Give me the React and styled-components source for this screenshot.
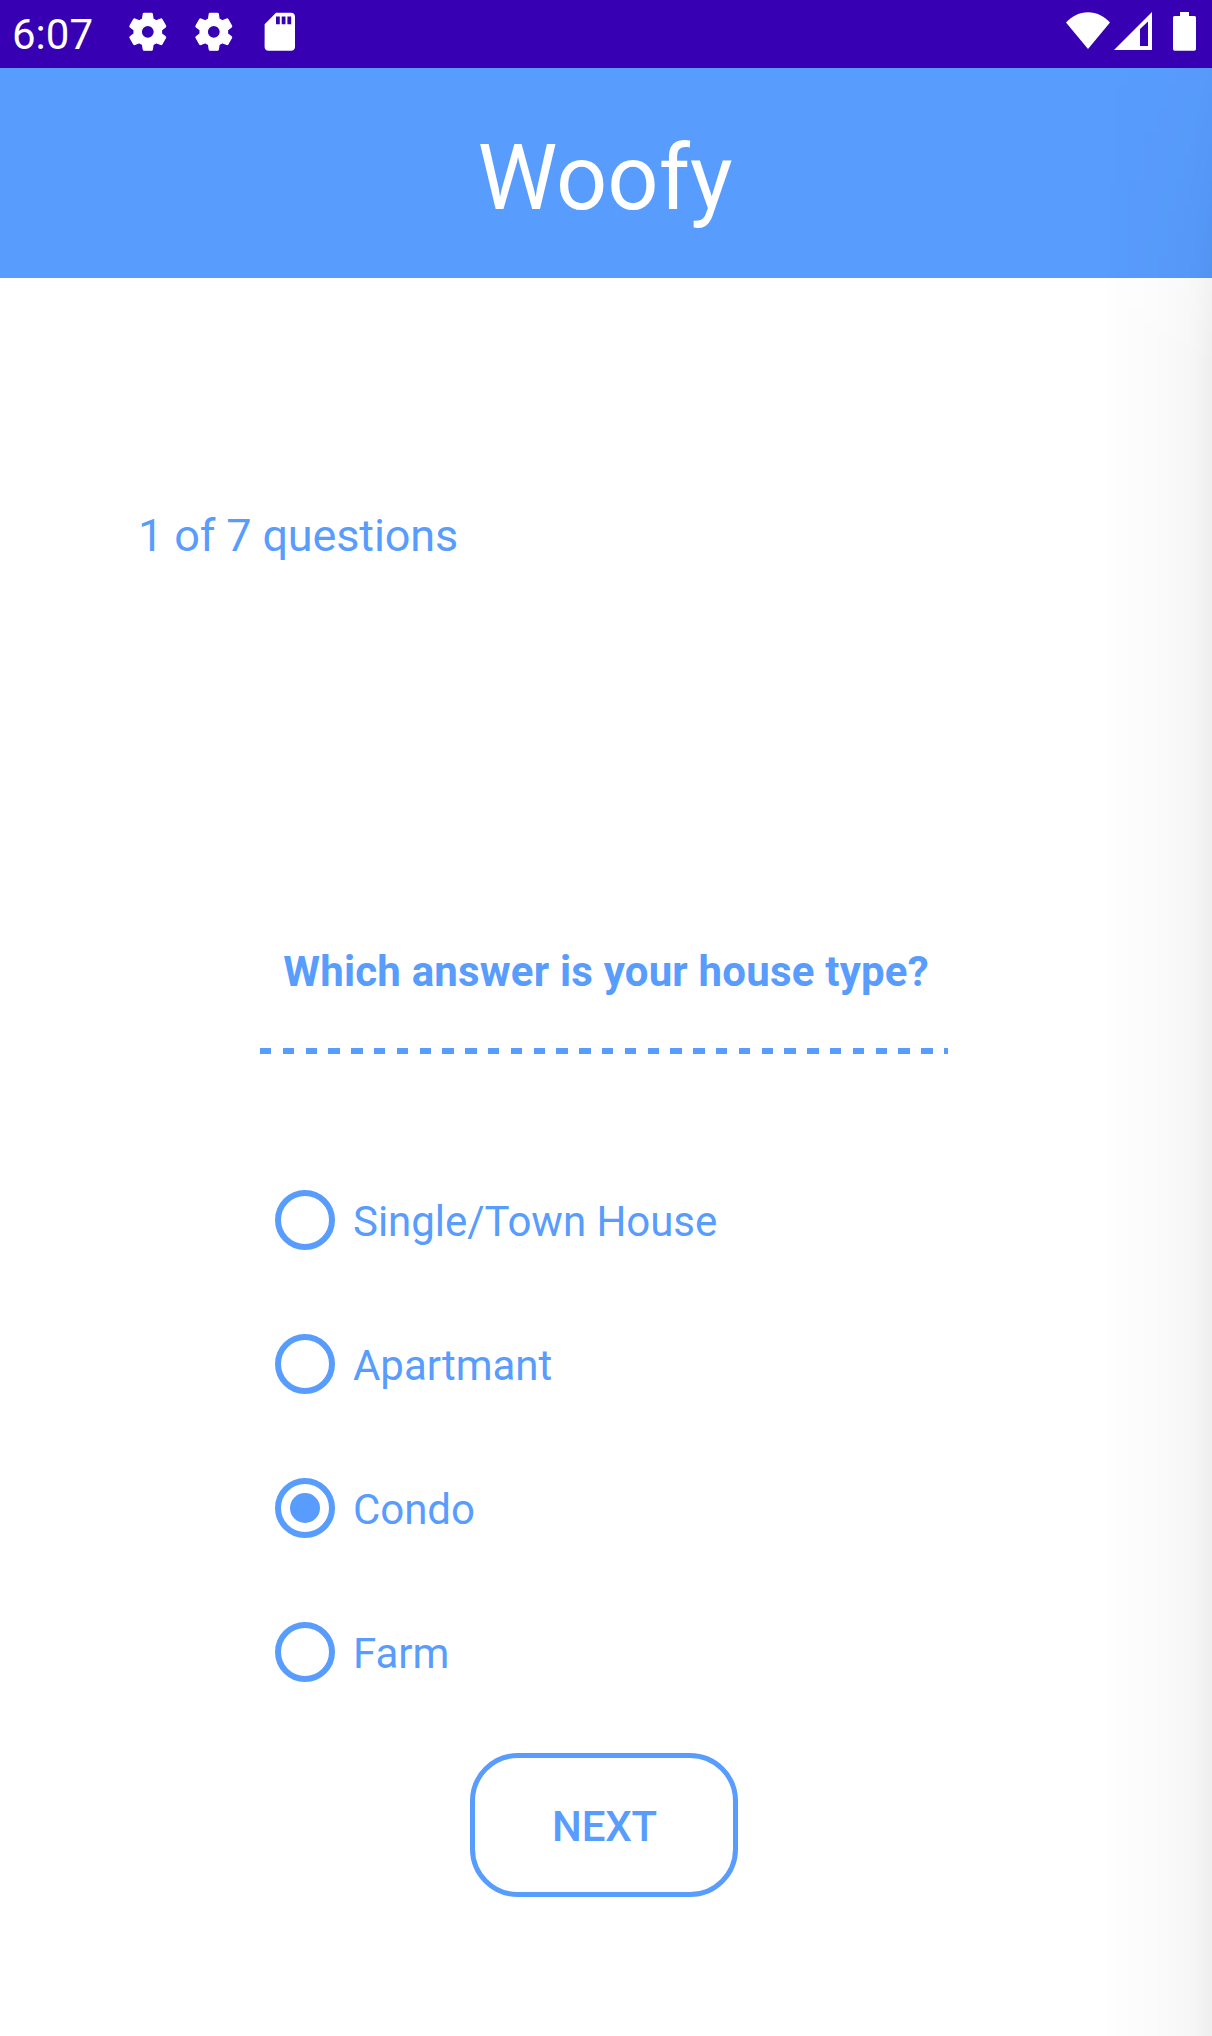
import React, { useState } from "react";
import styled, { createGlobalStyle } from "styled-components";

const BLUE = "#589cfd";

const GlobalStyle = createGlobalStyle`
  *, *::before, *::after { box-sizing: border-box; }
  body { margin: 0; background: #fff; }
`;

const Screen = styled.div`
  position: relative;
  display: flex;
  flex-direction: column;
  width: 1212px;
  height: 2036px;
  overflow: hidden;
  background: #fff;
  color: ${BLUE};
  font-family: Roboto, "Noto Sans", sans-serif;
`;

const StatusBar = styled.div`
  display: flex;
  flex: none;
  justify-content: space-between;
  height: 68px;
  padding: 0 16px 0 12px;
  background: #3700b3;
  color: #fff;
`;

const StatusGroup = styled.div`
  display: flex;
  align-items: flex-start;
`;

const Clock = styled.span`
  width: 113px;
  font-size: 42px;
  line-height: 70px;
`;

const NoticeIcon = styled.svg`
  flex: none;
  width: 45.6px;
  height: 45.6px;
  margin: 9.4px 20.4px 0 0;
  fill: #fff;
`;

const SystemIcon = styled.svg`
  flex: none;
  width: ${(p) => p.$width}px;
  height: 40px;
  margin: 12px 0 0 ${(p) => p.$gap}px;
  fill: #fff;
`;

const Header = styled.header`
  flex: none;
  height: 210px;
  padding: 6px 2px 0 0;
  background: ${BLUE};
`;

const Title = styled.h1`
  margin: 0;
  color: #fff;
  font-size: 90px;
  font-weight: 400;
  line-height: 210px;
  text-align: center;
`;

const Progress = styled.p`
  flex: none;
  margin: 228px 0 0 138px;
  font-size: 45px;
  line-height: 60px;
  letter-spacing: -0.14px;
`;

const Question = styled.h2`
  flex: none;
  margin: 376px 0 0;
  font-size: 42px;
  font-weight: 700;
  line-height: 60px;
  letter-spacing: 0.2px;
  text-align: center;
`;

const DashedRule = styled.div`
  flex: none;
  width: 688px;
  height: 6px;
  margin: 46px 0 0 260px;
  background: repeating-linear-gradient(90deg, ${BLUE} 0 11.4px, transparent 11.4px 22.8px);
`;

const Options = styled.div`
  display: flex;
  flex: none;
  flex-direction: column;
  margin: 94px 0 0 275px;
`;

const Option = styled.label`
  display: flex;
  align-items: center;
  height: 144px;
`;

const Radio = styled.input`
  appearance: none;
  display: grid;
  place-items: center;
  width: 60px;
  height: 60px;
  margin: 0;
  border: 6px solid ${BLUE};
  border-radius: 50%;

  &:checked::before {
    content: "";
    width: 30px;
    height: 30px;
    border-radius: 50%;
    background: ${BLUE};
  }
`;

const OptionText = styled.span`
  padding: 4px 0 0 18px;
  font-size: 42px;
  line-height: 60px;
  letter-spacing: -0.04px;
`;

const NextButton = styled.button`
  flex: none;
  width: 268px;
  height: 144px;
  margin: 29px 0 0 470px;
  padding: 4px 0 0 1px;
  border: 5px solid ${BLUE};
  border-radius: 48px;
  background: transparent;
  color: ${BLUE};
  font-family: inherit;
  font-size: 42px;
  font-weight: 500;
  line-height: 60px;
  letter-spacing: -0.2px;
`;

/* Soft shade falling over the right edge of the page. */
const EdgeShade = styled.div`
  position: absolute;
  top: 68px;
  right: 0;
  bottom: 0;
  width: 104px;
  background: linear-gradient(90deg, rgba(0, 0, 0, 0.004), rgba(0, 0, 0, 0.02) 55%, rgba(0, 0, 0, 0.035) 82%, rgba(0, 0, 0, 0.065));
  mask-image: linear-gradient(180deg, rgba(0, 0, 0, 0.2), #000 300px);
  pointer-events: none;
`;

const Gear = () => (
  <NoticeIcon viewBox="0 0 24 24">
    <path
      stroke="#fff"
      strokeWidth=".6"
      strokeLinejoin="round"
      transform="translate(12 12) scale(.97) translate(-12 -12)"
      d="M19.43 12.98c.04-.32.07-.64.07-.98s-.03-.66-.07-.98l2.11-1.65c.19-.15.24-.42.12-.64l-2-3.46c-.12-.22-.39-.3-.61-.22l-2.49 1c-.52-.4-1.08-.73-1.69-.98l-.38-2.65C14.46 2.18 14.25 2 14 2h-4c-.25 0-.46.18-.49.42l-.38 2.65c-.61.25-1.17.59-1.69.98l-2.49-1c-.23-.09-.49 0-.61.22l-2 3.46c-.13.22-.07.49.12.64l2.11 1.65c-.04.32-.07.65-.07.98s.03.66.07.98l-2.11 1.65c-.19.15-.24.42-.12.64l2 3.46c.12.22.39.3.61.22l2.49-1c.52.4 1.08.73 1.69.98l.38 2.65c.03.24.24.42.49.42h4c.25 0 .46-.18.49-.42l.38-2.65c.61-.25 1.17-.59 1.69-.98l2.49 1c.23.09.49 0 .61-.22l2-3.46c.12-.22.07-.49-.12-.64l-2.11-1.65zM12 15.5c-1.93 0-3.5-1.57-3.5-3.5s1.57-3.5 3.5-3.5 3.5 1.57 3.5 3.5-1.57 3.5-3.5 3.5z"
    />
  </NoticeIcon>
);

const SdCard = () => (
  <NoticeIcon viewBox="0 0 24 24">
    <path d="M18 2h-8L4.02 8 4 20c0 1.1.9 2 2 2h12c1.1 0 2-.9 2-2V4c0-1.1-.9-2-2-2zm-6 6h-2V4h2v4zm3 0h-2V4h2v4zm3 0h-2V4h2v4z" />
  </NoticeIcon>
);

const CHOICES = ["Single/Town House", "Apartmant", "Condo", "Farm"];

export default function App() {
  const [choice, setChoice] = useState("Condo");
  return (
    <Screen>
      <GlobalStyle />
      <StatusBar>
        <StatusGroup>
          <Clock>6:07</Clock>
          <Gear />
          <Gear />
          <SdCard />
        </StatusGroup>
        <StatusGroup>
          <SystemIcon $width={44} $gap={0} viewBox="0 0 44 40">
            <path d="M22 37 0 10.5C6 4 13.5 .2 22 .2S38 4 44 10.5Z" />
          </SystemIcon>
          <SystemIcon $width={38} $gap={4} viewBox="0 0 38 40">
            <path fillRule="evenodd" d="M0 38 38 0V38ZM26 34H34V9.5L26 17Z" />
          </SystemIcon>
          <SystemIcon $width={23} $gap={21} viewBox="0 0 23 40">
            <path d="M7 0H16V4H21.5Q23 4 23 5.5V37Q23 38.7 21.3 38.7H1.7Q0 38.7 0 37V5.5Q0 4 1.5 4H7Z" />
          </SystemIcon>
        </StatusGroup>
      </StatusBar>
      <Header>
        <Title>Woofy</Title>
      </Header>
      <Progress>1 of 7 questions</Progress>
      <Question>Which answer is your house type?</Question>
      <DashedRule />
      <Options>
        {CHOICES.map((name) => (
          <Option key={name}>
            <Radio
              type="radio"
              name="house"
              checked={choice === name}
              onChange={() => setChoice(name)}
            />
            <OptionText>{name}</OptionText>
          </Option>
        ))}
      </Options>
      <NextButton type="button">NEXT</NextButton>
      <EdgeShade />
    </Screen>
  );
}
